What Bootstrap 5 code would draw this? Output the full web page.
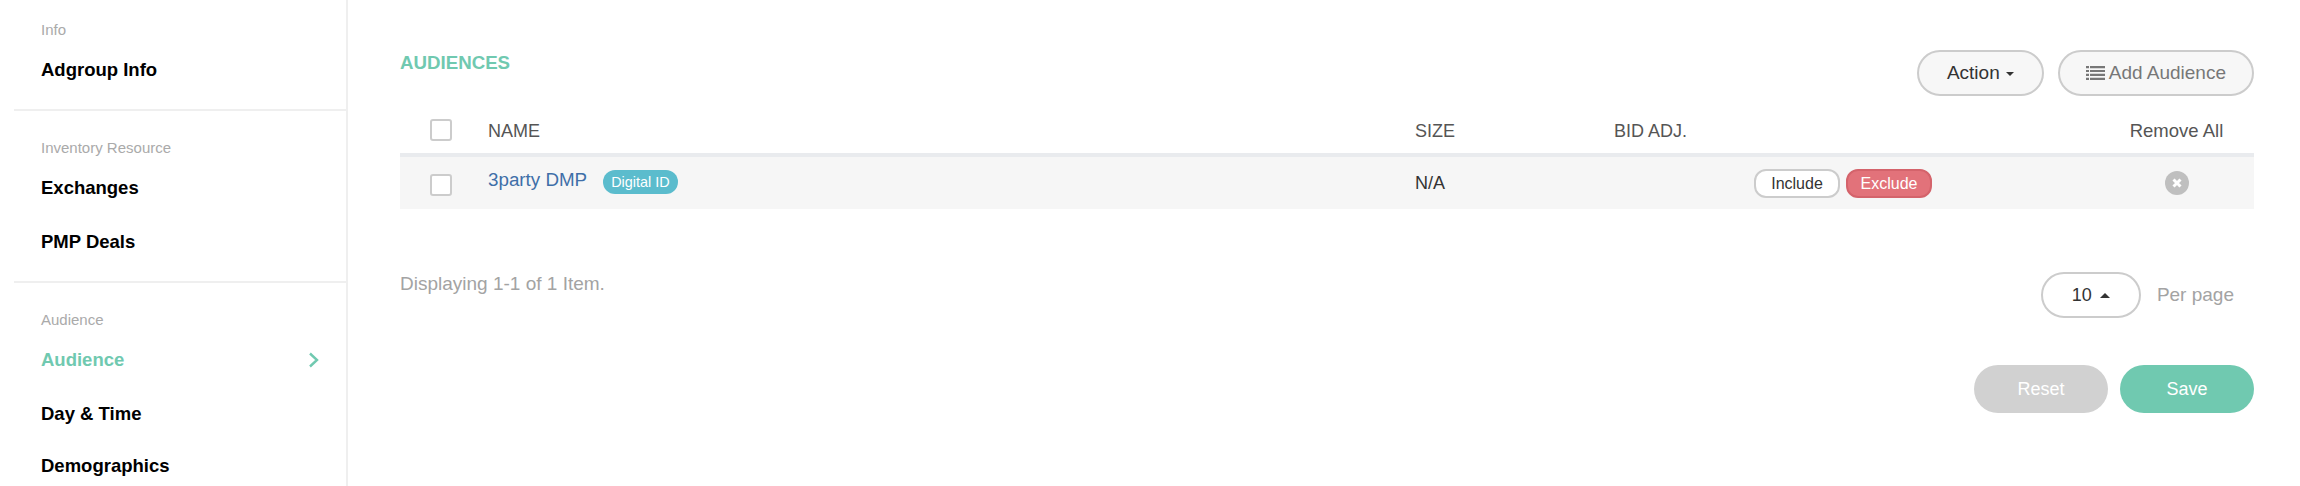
<!DOCTYPE html>
<html lang="en">
<head>
<meta charset="utf-8">
<title>Audience</title>
<link href="https://cdn.jsdelivr.net/npm/bootstrap@5.3.0/dist/css/bootstrap.min.css" rel="stylesheet">
<style>
html,body{height:486px;overflow:hidden}
body{font-family:"Liberation Sans",Arial,sans-serif;color:#333;background:#fff}
.shell{height:486px}
.side{width:348px;flex:none;border-right:2px solid #efefef;padding-left:14px;height:486px;overflow:hidden}
.side-group{border-bottom:2px solid #efefef;padding-left:27px}
.side-group.g1{height:111px;padding-top:20px}
.side-group.g2{height:172px;padding-top:27px}
.side-group.g3{border:0;padding-top:27px}
.side-label{font-size:15px;line-height:20px;color:#aaa;margin-bottom:15px}
.side-link{display:flex;justify-content:space-between;align-items:center;font-size:18.5px;font-weight:700;line-height:30px;color:#000;text-decoration:none;margin-bottom:24px;padding-right:27px}
.g3 .side-link:nth-of-type(n+2){margin-bottom:22px}
.side-link.on{color:#70c9b0}
.main{flex:1;padding:50px 46px 0 52px;min-width:0}
.title{font-size:18.7px;font-weight:700;line-height:24px;color:#70c9b0;margin:1px 0 0}
.pill{border:2px solid #ccc;border-radius:23px;background:#f7f7f7;font-size:19px;line-height:24px;height:46px;padding:0 28px;color:#333}
.pill.muted{color:#777;padding:0 26px}
.pill:hover{background:#f7f7f7;border-color:#ccc}
.pill.dropdown-toggle::after{border-top-width:4.5px;border-left-width:4.5px;border-right-width:4.5px;margin-left:6px;vertical-align:3px}
.gapx{gap:14px}
.aud{width:100%;border-collapse:collapse;table-layout:fixed;margin-top:9px}
.aud th{font-weight:400;font-size:18px;color:#555;height:50px;border-bottom:4px solid #e9ebee;padding:4px 0 0;vertical-align:middle}
.aud td{background:#f6f6f6;height:54px;padding:0;font-size:18px;vertical-align:middle}
.aud th .tick{margin-top:-2px}
.aud td .tick{margin-top:4px}
.aud th.endc{font-size:18.5px;padding-right:16px}
.aud td.endc{padding-right:16px}
.tick{display:block;width:22px;height:22px;border:2px solid #ccc;border-radius:3px;background:#fff;margin-left:30px}
.dmp{color:#3f6fa8;text-decoration:none;position:relative;top:-3px;font-size:18.8px}
.tag{display:inline-block;background:#5bbccd;color:#fff;font-size:14.4px;line-height:24px;height:24px;padding:0 8px;border-radius:12px;margin-left:11px;position:relative;top:-2px}
.mini{font-size:16px;line-height:25px;height:29px;padding:0;border-radius:12px;border:2px solid #ccc;background:#fff;color:#333;width:86px}
.mini.ex{background:#e2727a;border-color:#d4636b;color:#fff}
.mini:hover{background:#fff;border-color:#ccc;color:#333}
.mini.ex:hover{background:#e2727a;border-color:#d4636b;color:#fff}
.pair{margin-left:-1px;gap:6px}
.rm{display:block;width:24px;height:24px;border-radius:50%;background:#bfbfbf;margin:0 auto}
.foot{margin-top:63px;height:46px}
.count{font-size:19px;color:#a3a3a3;line-height:26px;margin-top:-1px;margin-bottom:22px}
.perpage{font-size:19px;color:#a3a3a3;margin-left:16px;margin-right:20px}
.pill.pg{background:#fff;width:100px;padding:0;font-size:18px}
.acts{margin-top:47px}
.big{width:134px;height:48px;border:0;border-radius:24px;color:#fff;font-size:18px;padding:0}
.big.rs,.big.rs:hover{background:#d1d1d1;color:#fff}
.big.sv,.big.sv:hover{background:#70c9b0;color:#fff}
.upcaret{display:inline-block;width:0;height:0;border-left:5px solid transparent;border-right:5px solid transparent;border-bottom:5px solid #333;margin-left:3px;vertical-align:3px}
</style>
</head>
<body>
<div class="d-flex shell">
  <nav class="side">
    <div class="side-group g1">
      <div class="side-label">Info</div>
      <a class="side-link" href="#">Adgroup Info</a>
    </div>
    <div class="side-group g2">
      <div class="side-label">Inventory Resource</div>
      <a class="side-link" href="#">Exchanges</a>
      <a class="side-link" href="#">PMP Deals</a>
    </div>
    <div class="side-group g3">
      <div class="side-label">Audience</div>
      <a class="side-link on" href="#">Audience
        <svg width="11" height="16" viewBox="0 0 11 16"><path d="M2 1.5 9 8l-7 6.5" fill="none" stroke="#70c9b0" stroke-width="2.4"/></svg>
      </a>
      <a class="side-link" href="#">Day &amp; Time</a>
      <a class="side-link" href="#">Demographics</a>
    </div>
  </nav>
  <main class="main">
    <div class="d-flex justify-content-between align-items-start">
      <h2 class="title">AUDIENCES</h2>
      <div class="d-flex gapx">
        <button class="btn pill dropdown-toggle" type="button">Action</button>
        <button class="btn pill muted d-flex align-items-center" type="button">
          <svg class="me-1" width="19" height="14" viewBox="0 0 19 14" fill="#777"><path d="M0 0h3v2.2H0zM4 0h15v2.2H4zM0 3.9h3v2.2H0zM4 3.9h15v2.2H4zM0 7.8h3V10H0zM4 7.8h15V10H4zM0 11.7h3v2.2H0zM4 11.7h15v2.2H4z"/></svg>
          Add Audience</button>
      </div>
    </div>
    <table class="aud">
      <colgroup><col style="width:88px"><col style="width:927px"><col style="width:199px"><col style="width:141px"><col style="width:360px"><col></colgroup>
      <thead>
        <tr><th><span class="tick"></span></th><th>NAME</th><th>SIZE</th><th>BID ADJ.</th><th></th><th class="text-center endc">Remove All</th></tr>
      </thead>
      <tbody>
        <tr>
          <td><span class="tick"></span></td>
          <td><a class="dmp" href="#">3party DMP</a> <span class="tag">Digital ID</span></td>
          <td>N/A</td>
          <td></td>
          <td><div class="d-flex pair"><button class="btn mini" type="button">Include</button><button class="btn mini ex" type="button">Exclude</button></div></td>
          <td class="endc"><svg class="rm" viewBox="0 0 24 24"><path d="M8.5 8.5l7 7m0-7l-7 7" stroke="#fff" stroke-width="3" fill="none"/></svg></td>
        </tr>
      </tbody>
    </table>
    <div class="d-flex justify-content-between align-items-center foot">
      <div class="count">Displaying 1-1 of 1 Item.</div>
      <div class="d-flex align-items-center">
        <button class="btn pill pg" type="button">10 <span class="upcaret"></span></button>
        <span class="perpage">Per page</span>
      </div>
    </div>
    <div class="d-flex justify-content-end gap-2 acts">
      <button class="btn big rs" type="button">Reset</button>
      <button class="btn big sv ms-1" type="button">Save</button>
    </div>
  </main>
</div>
<script src="https://cdn.jsdelivr.net/npm/bootstrap@5.3.0/dist/js/bootstrap.bundle.min.js"></script>
</body>
</html>
